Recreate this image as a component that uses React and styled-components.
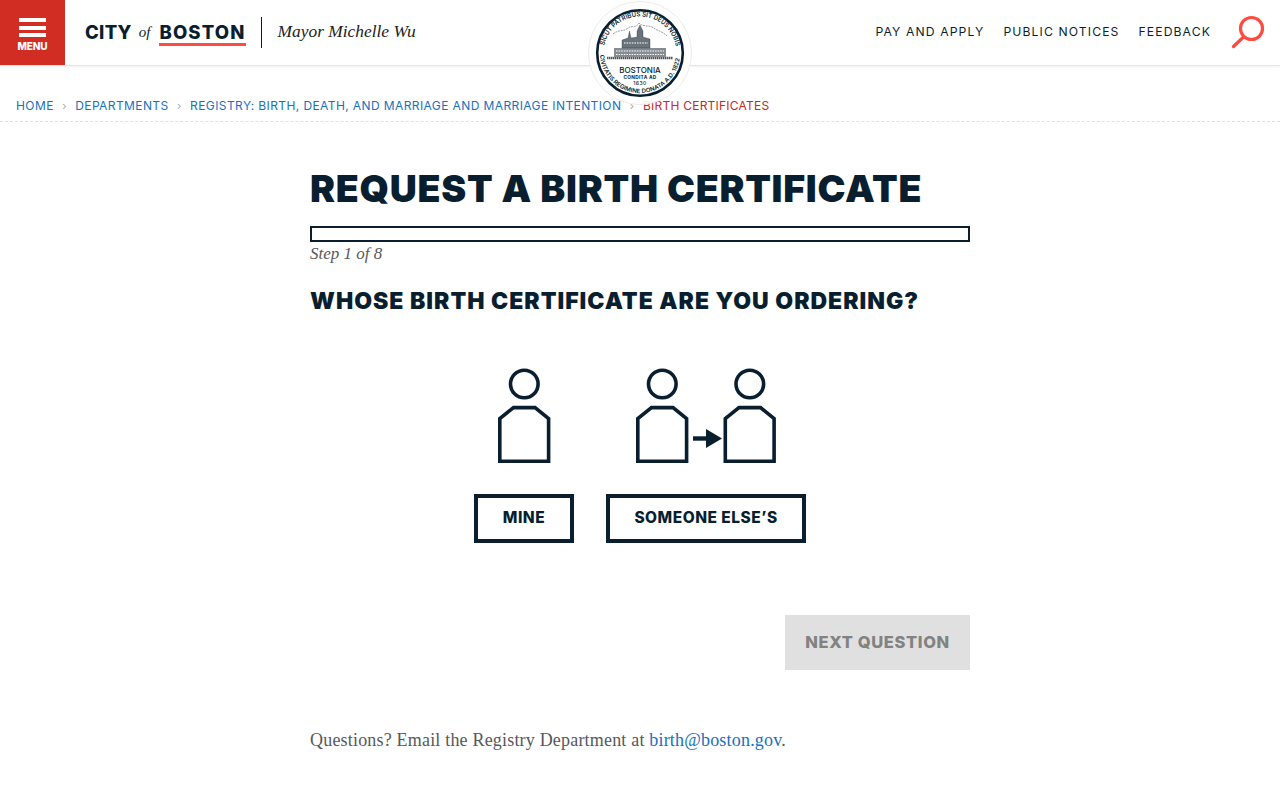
import React from "react";
import styled, { createGlobalStyle } from "styled-components";

const Global = createGlobalStyle`
  html, body { margin: 0; padding: 0; background: #fff; }
  body { font-family: Inter, "Liberation Sans", sans-serif; color: #091f2f; }
  * { box-sizing: border-box; }
`;
const SANS = `Inter, "Liberation Sans", sans-serif`;
const SERIF = `"Liberation Serif", "DejaVu Serif", serif`;
const NAVY = "#091f2f";
const RED = "#fb4d42";

const Page = styled.div`position: relative; width: 1280px; height: 800px; overflow: hidden;`;
const Header = styled.header`
  display: flex; align-items: center; height: 66px; background: #fff;
  border-bottom: 1px solid #e6e6e6; box-shadow: 0 1px 2px rgba(0,0,0,.06);
`;
const MenuButton = styled.button`
  width: 65px; height: 65px; align-self: flex-start; background: #d22d23; border: 0; padding: 18px 0 0;
  display: flex; flex-direction: column; align-items: center; gap: 3.5px; color: #fff;
`;
const MenuBar = styled.span`display: block; width: 27px; height: 4px; background: #fff;`;
const MenuLabel = styled.span`font: 800 10px/10px ${SANS}; letter-spacing: -.1px;`;
const Logo = styled.div`display: flex; align-items: center; margin: -2px 0 0 20px; color: ${NAVY};`;
const City = styled.span`font: 800 18.5px/22px ${SANS}; letter-spacing: .3px;`;
const Of = styled.span`font: italic 400 15px/22px ${SERIF}; margin: 0 9px 0 7px;`;
const Boston = styled.span`font: 800 18.5px/22px ${SANS}; letter-spacing: 1.15px; border-bottom: 3px solid ${RED}; margin-top: 3px;`;
const Divider = styled.span`width: 1px; height: 31px; background: ${NAVY}; margin: 0 16px 0 15px; position: relative; top: 1px;`;
const Mayor = styled.span`font: italic 400 17.4px/22px ${SERIF}; color: #222; position: relative; top: -1px;`;
const Nav = styled.nav`margin-left: auto; display: flex; align-items: center; gap: 19px; padding: 0 16px 1px 0;`;
const NavLink = styled.a`font: 400 12.2px/16px ${SANS}; letter-spacing: 1.1px; color: ${NAVY};`;
const SearchIcon = styled.svg`display: block; width: 34px; height: 34px; margin: 0 -1px 0 1px;`;
const Seal = styled.svg`position: absolute; left: 588px; top: 1px; width: 104px; height: 104px;`;
const Crumbs = styled.div`
  display: flex; align-items: center; height: 56px; padding: 25px 16px 0;
  border-bottom: 1px dashed #e0e0e0; font: 400 12px/16px ${SANS}; letter-spacing: .4px;
`;
const Crumb = styled.a`
  color: ${p => (p.$current ? "#c8281e" : "#1871bd")};
  letter-spacing: ${p => (p.$current ? ".24px" : ".4px")};
`;
const Sep = styled.span`width: 21.5px; text-align: center; color: #aaa; font-size: 11px;`;
const Main = styled.main`width: 660px; margin: 0 auto;`;
const Title = styled.h1`margin: 44px 0 0; font: 900 37.5px/46px ${SANS}; letter-spacing: .72px; color: ${NAVY};`;
const Progress = styled.div`height: 16px; border: 2px solid ${NAVY}; margin-top: 14px;`;
const Step = styled.div`font: italic 400 17px/22px ${SERIF}; color: #58585b; margin-top: 1px;`;
const Question = styled.h2`margin: 21px 0 0; font: 900 23px/30px ${SANS}; letter-spacing: 1px; color: ${NAVY};`;
const Choices = styled.div`display: flex; justify-content: center; gap: 32px; margin-top: 52px;`;
const Choice = styled.div`display: flex; flex-direction: column; align-items: center;`;
const Choose = styled.button`
  height: 49px; width: ${p => p.$w}px; margin-top: 31px; background: #fff; border: 4px solid ${NAVY};
  padding: 0 0 2px; font: 800 15.5px/1 ${SANS}; letter-spacing: .5px; color: ${NAVY};
`;
const Actions = styled.div`display: flex; justify-content: flex-end; margin-top: 72px;`;
const Next = styled.button`
  width: 185px; height: 55px; background: #e0e0e0; border: 0; color: #828282;
  font: 800 16.5px/1 ${SANS}; letter-spacing: .62px;
`;
const Help = styled.p`margin: 58px 0 0; font: 400 18px/24px ${SERIF}; letter-spacing: .19px; color: #58585b;`;
const Mail = styled.a`color: #1871bd;`;

const Person = ({ x = 0 }) => (
  <g transform={`translate(${x} 0)`} fill="none" stroke={NAVY} strokeWidth="3.6">
    <circle cx="26.3" cy="16" r="13.8" />
    <path d="M15.5 39.6 H37 L50.6 50.5 V93.2 H1.8 V50.5 Z" />
  </g>
);

export default function App() {
  return (
    <Page>
      <Global />
      <Header>
        <MenuButton aria-label="Menu">
          <MenuBar /><MenuBar /><MenuBar />
          <MenuLabel>MENU</MenuLabel>
        </MenuButton>
        <Logo>
          <City>CITY</City><Of>of</Of><Boston>BOSTON</Boston>
          <Divider />
          <Mayor>Mayor Michelle Wu</Mayor>
        </Logo>
        <Nav>
          <NavLink>PAY AND APPLY</NavLink>
          <NavLink>PUBLIC NOTICES</NavLink>
          <NavLink>FEEDBACK</NavLink>
          <SearchIcon viewBox="0 0 34 34" fill="none" stroke={RED} strokeWidth="3.2">
            <circle cx="20.5" cy="13.5" r="11" />
            <path d="M12.5 22 L2.5 31.5" strokeLinecap="round" strokeWidth="3.4" />
          </SearchIcon>
        </Nav>
      </Header>
      <Seal viewBox="0 0 104 104">
        <defs>
          <path id="sealTop" d="M16.3 44.4 A36.5 36.5 0 0 1 88.1 46.6" />
          <path id="sealBottom" d="M12.05 54 A40 40 0 0 0 91.95 54" />
        </defs>
        <circle cx="52" cy="52" r="51.5" fill="#fff" fillOpacity=".9" stroke="#ececec" />
        <circle cx="52" cy="52" r="42.8" fill="#fff" stroke={NAVY} strokeWidth="2.6" />
        <text fontFamily="Inter, sans-serif" fontSize="6.6" fontWeight="600" fill={NAVY}>
          <textPath href="#sealTop" textLength="100" lengthAdjust="spacingAndGlyphs">SICUT PATRIBUS SIT DEUS NOBIS</textPath>
        </text>
        <text fontFamily="Inter, sans-serif" fontSize="5.8" fontWeight="600" fill={NAVY}>
          <textPath href="#sealBottom" textLength="118" lengthAdjust="spacingAndGlyphs">CIVITATIS REGIMINE DONATA A.D. 1822</textPath>
        </text>
        <path d="M25 33 C31 28 36 31 40 27 C44 24 47 28 51 22 C56 27 62 23 67 28 C71 30 75 31 79 35" fill="none" stroke="#888" strokeWidth=".8" strokeDasharray="2 .8" />
        <path d="M19 57 H85" stroke="#555" strokeWidth="2.4" strokeDasharray="1.5 .5" />
        <rect x="26" y="47" width="52" height="9" fill="#858c92" />
        <path d="M34 47 V39 L40 37 L41.5 30 L43 37 L49 36 V30 L52 24 L55 30 V36 L62 38 V47 Z" fill="#6b737a" stroke={NAVY} strokeWidth=".3" />
        <path d="M28 50 H76 M28 53.5 H76 M36 42 H60" stroke="#fff" strokeWidth="1.1" strokeDasharray="1.6 1" />
        <text x="52" y="71.5" textAnchor="middle" fontFamily="Inter, sans-serif" fontSize="8" fontWeight="500" fill={NAVY}>BOSTONIA</text>
        <text x="52" y="77.5" textAnchor="middle" fontFamily="Inter, sans-serif" fontSize="4.8" fontWeight="700" fill={NAVY} letterSpacing=".3">CONDITA AD</text>
        <text x="52" y="83.5" textAnchor="middle" fontFamily="Inter, sans-serif" fontSize="5" fontWeight="500" fill={NAVY} letterSpacing=".5">1630</text>
      </Seal>
      <Crumbs>
        <Crumb>HOME</Crumb><Sep>›</Sep>
        <Crumb>DEPARTMENTS</Crumb><Sep>›</Sep>
        <Crumb>REGISTRY: BIRTH, DEATH, AND MARRIAGE AND MARRIAGE INTENTION</Crumb><Sep>›</Sep>
        <Crumb $current>BIRTH CERTIFICATES</Crumb>
      </Crumbs>
      <Main>
        <Title>REQUEST A BIRTH CERTIFICATE</Title>
        <Progress />
        <Step>Step 1 of 8</Step>
        <Question>WHOSE BIRTH CERTIFICATE ARE YOU ORDERING?</Question>
        <Choices>
          <Choice>
            <svg width="53" height="95" viewBox="0 0 53 95"><Person /></svg>
            <Choose $w={100}>MINE</Choose>
          </Choice>
          <Choice>
            <svg width="140" height="95" viewBox="0 0 140 95">
              <Person />
              <Person x={87.5} />
              <path d="M57 70.5 H72" stroke={NAVY} strokeWidth="4.4" />
              <path d="M70 61 L86 70.5 L70 80 Z" fill={NAVY} />
            </svg>
            <Choose $w={200}>SOMEONE ELSE’S</Choose>
          </Choice>
        </Choices>
        <Actions><Next>NEXT QUESTION</Next></Actions>
        <Help>Questions? Email the Registry Department at <Mail>birth@boston.gov</Mail>.</Help>
      </Main>
    </Page>
  );
}
